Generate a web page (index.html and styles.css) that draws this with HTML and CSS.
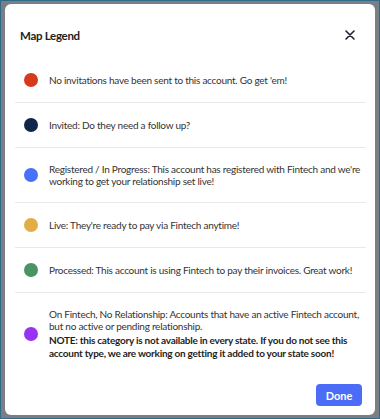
FILE: index.html
```html
<!DOCTYPE html>
<html lang="en">
<head>
  <meta charset="UTF-8">
  <title>Map Legend</title>
  <link rel="stylesheet" href="styles.css">
</head>
<body>

<div class="overlay">
  <div class="modal">
    <div class="modal-header">
      <div class="modal-title">Map Legend</div>
      <button class="close-button" aria-label="Close">
        <svg width="10" height="10" viewBox="0 0 10 10">
          <path d="M1 1 L9 9 M9 1 L1 9" stroke="#1c2230" stroke-width="1.6" stroke-linecap="round"/>
        </svg>
      </button>
    </div>

    <div class="legend-list">
      <div class="legend-row">
        <span class="dot dot-red"></span>
        <div class="legend-text">No invitations have been sent to this account. Go get 'em!</div>
      </div>
      <div class="legend-row">
        <span class="dot dot-navy"></span>
        <div class="legend-text">Invited: Do they need a follow up?</div>
      </div>
      <div class="legend-row">
        <span class="dot dot-blue"></span>
        <div class="legend-text">Registered / In Progress: This account has registered with Fintech and we're working to get your relationship set live!</div>
      </div>
      <div class="legend-row">
        <span class="dot dot-yellow"></span>
        <div class="legend-text">Live: They're ready to pay via Fintech anytime!</div>
      </div>
      <div class="legend-row">
        <span class="dot dot-green"></span>
        <div class="legend-text">Processed: This account is using Fintech to pay their invoices. Great work!</div>
      </div>
      <div class="legend-row last">
        <span class="dot dot-purple"></span>
        <div class="legend-text">
          On Fintech, No Relationship: Accounts that have an active Fintech account, but no active or pending relationship.
          <div class="note">NOTE: this category is not available in every state. If you do not see this account type, we are working on getting it added to your state soon!</div>
        </div>
      </div>
    </div>

    <div class="modal-footer">
      <button class="done-button">Done</button>
    </div>
  </div>
</div>

</body>
</html>
```

FILE: styles.css
```css
body {
  margin: 0;
  padding: 0;
  font-family: 'Lato', 'Noto Sans', sans-serif;
  background-color: #2f6c8c;
  color: #2b2b2b;
}
.overlay {
  margin: 1px;
  height: 417px;
  background-color: #7b7f83;
  padding: 3px 4px 0 4px;
  box-sizing: border-box;
}
.modal {
  background-color: white;
  border-radius: 6px;
  height: 411px;
  padding: 0 9px 0 10px;
  box-sizing: border-box;
}
.modal-header {
  display: flex;
  align-items: center;
  justify-content: space-between;
  height: 54px;
  padding: 8px 11px 0 5px;
  box-sizing: border-box;
}
.modal-title {
  font-size: 11.5px;
  font-weight: bold;
  letter-spacing: -0.3px;
  color: #222;
}
.close-button {
  border: none;
  background: none;
  padding: 0;
  width: 10px;
  height: 10px;
  cursor: pointer;
}
.close-button svg {
  display: block;
}
.legend-row {
  display: flex;
  align-items: center;
  gap: 11px;
  padding: 15px 2px 15px 9px;
  border-bottom: 1px solid #e9e9e9;
}
.legend-row.last {
  border-bottom: none;
}
.dot {
  flex: none;
  width: 14px;
  height: 14px;
  border-radius: 50%;
}
.dot-red { background-color: #d7391c; }
.dot-navy { background-color: #0f2549; }
.dot-blue { background-color: #4870f8; }
.dot-yellow { background-color: #e2ad47; }
.dot-green { background-color: #4a9464; }
.dot-purple { background-color: #9a32f2; }
.legend-text {
  font-size: 10px;
  letter-spacing: -0.25px;
  line-height: 12px;
  color: #333;
}
.note {
  font-weight: bold;
  color: #1e1e1e;
  line-height: 13px;
  margin-top: 2px;
}
.modal-footer {
  display: flex;
  justify-content: flex-end;
  padding: 9px 4px 0 0;
}
.done-button {
  background-color: #4a6cf7;
  color: white;
  border: none;
  border-radius: 4px;
  width: 46px;
  height: 22px;
  font-family: 'Lato', 'Noto Sans', sans-serif;
  font-size: 11px;
  font-weight: bold;
  cursor: pointer;
}
```
